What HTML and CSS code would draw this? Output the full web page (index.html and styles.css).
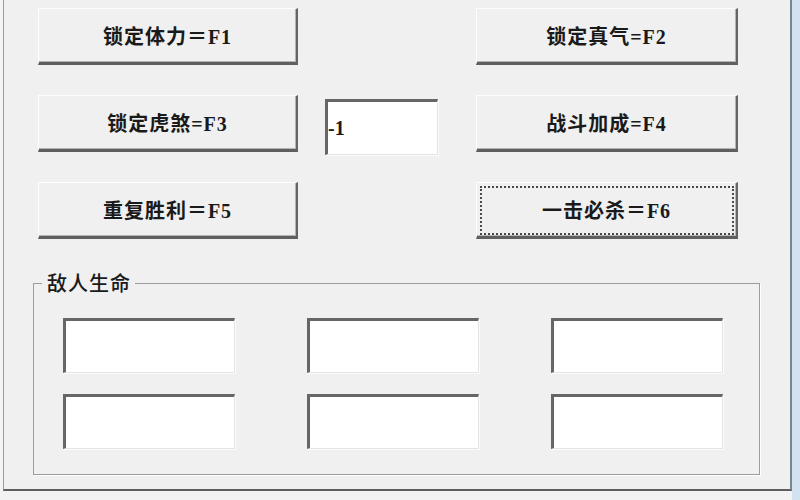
FILE: index.html
```html
<!DOCTYPE html>
<html lang="zh-CN">
<head>
    <meta charset="UTF-8">
    <title>修改器</title>
    <link rel="stylesheet" href="styles.css">
</head>
<body>
<div class="screen">
    <div class="dialog">
        <div class="keys">
            <button class="btn">锁定体力＝F1</button>
            <span></span>
            <button class="btn">锁定真气=F2</button>

            <button class="btn">锁定虎煞=F3</button>
            <input class="edit edit-num" type="text" value="-1">
            <button class="btn">战斗加成=F4</button>

            <button class="btn">重复胜利＝F5</button>
            <span></span>
            <button class="btn focus">一击必杀＝F6</button>
        </div>

        <fieldset class="group">
            <legend>敌人生命</legend>
            <div class="life">
                <input class="edit" type="text">
                <input class="edit" type="text">
                <input class="edit" type="text">
                <input class="edit" type="text">
                <input class="edit" type="text">
                <input class="edit" type="text">
            </div>
        </fieldset>
    </div>
    <div class="frame"></div>
</div>
</body>
</html>
```

FILE: styles.css
```css
body{
    margin: 0;
    background: #f3f3f3;
    font-family: "Liberation Serif", "Noto Sans CJK SC", serif;
    color: #1a1a1a;
}
.screen{
    display: flex;
    width: 800px;
    height: 500px;
    overflow: hidden;
}
.dialog{
    box-sizing: border-box;
    width: 789px;
    height: 491px;
    margin-left: 3px;
    background: #f0f0f0;
    border-left: 1px solid #9c9c9c;
    border-right: 2px solid #7a8390;
    border-bottom: 2px solid #5e5e5e;
}
.frame{
    flex: 1;
    background: #d3e2f1;
}

/* 按键区 */
.keys{
    display: grid;
    grid-template-columns: 260px 124px 262px;
    grid-auto-rows: 57px;
    column-gap: 27px;
    row-gap: 30px;
    padding: 8px 0 0 34px;
}
.btn{
    font: 600 20px "Liberation Serif", "Noto Sans CJK SC", serif;
    letter-spacing: 1px;
    color: #1a1a1a;
    background: #f0f0f0;
    border-top: 1px solid #fdfdfd;
    border-left: 1px solid #fdfdfd;
    border-right: 2px solid #656565;
    border-bottom: 3px solid #5f5f5f;
    box-shadow: inset -1px -1px 0 #b4b4b4;
    padding: 0;
}
.btn.focus{
    outline: 2px dotted #4a4a4a;
    outline-offset: -6px;
}

/* 输入框 */
.edit{
    box-sizing: border-box;
    background: #fff;
    border-top: 3px solid #666;
    border-left: 3px solid #666;
    border-right: 1px solid #e4e4e4;
    border-bottom: 1px solid #e4e4e4;
    box-shadow: 1px 1px 0 #fbfbfb;
    padding: 0;
    margin: 0;
}
.edit-num{
    width: 113px;
    height: 56px;
    margin-top: 4px;
    font: 600 20px "Liberation Serif", serif;
    color: #1a1a1a;
}

/* 敌人生命 */
.group{
    box-sizing: border-box;
    width: 727px;
    height: 203px;
    margin: 33px 0 0 29px;
    padding: 24px 0 0 29px;
    border: 1px solid #9c9c9c;
    box-shadow: 1px 1px 0 #fff;
}
.group legend{
    font: 500 20px/22px "Noto Sans CJK SC", sans-serif;
    letter-spacing: 1px;
    color: #1a1a1a;
    margin-left: -21px;
    padding: 0 4px 0 5px;
}
.life{
    display: grid;
    grid-template-columns: repeat(3, 172px);
    grid-auto-rows: 55px;
    column-gap: 72px;
    row-gap: 21px;
}
.life .edit{
    width: 172px;
    height: 55px;
}
```
